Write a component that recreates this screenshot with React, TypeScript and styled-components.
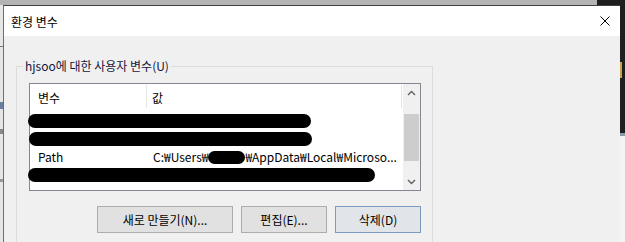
import React from "react";
import styled, { createGlobalStyle } from "styled-components";

const Global = createGlobalStyle`
  html, body { margin: 0; padding: 0; }
  body {
    width: 625px;
    height: 242px;
    overflow: hidden;
    background: #e4e4e4;
    font-family: "Noto Sans CJK KR", "Noto Sans", sans-serif;
    font-size: 12px;
    color: #000;
  }
`;

const Desktop = styled.div`
  display: grid;
  grid-template-columns: 3px 617px 5px;
  grid-template-rows: 5px 237px;
  width: 625px;
  height: 242px;
  overflow: hidden;
`;

const TopBand = styled.div`
  grid-column: 1 / 3;
  grid-row: 1;
  background: linear-gradient(to right, #b3b3b3 0, #b3b3b3 597px, #1e1e1e 597px);
`;

const LeftStrip = styled.div`
  grid-column: 1;
  grid-row: 2;
  background: #e6e6e6;
  display: flex;
  flex-direction: column;
  padding-top: 41px;
`;

const StripMark = styled.div<{ $h: number; $c: string; $gap: number }>`
  height: ${(p) => p.$h}px;
  margin-bottom: ${(p) => p.$gap}px;
  background: ${(p) => p.$c};
`;

const RightStrip = styled.div`
  grid-column: 3;
  grid-row: 1 / 3;
  display: flex;
  flex-direction: column;
`;

const DarkPane = styled.div`
  height: 133px;
  background: #1f1f1f;
  display: flex;
  flex-direction: column;
  padding-top: 62px;
  box-sizing: border-box;
`;

const Accent = styled.div`
  width: 2px;
  height: 16px;
  background: #c8a24a;
`;

const PaneLine = styled.div`
  height: 3px;
  background: #8a99a6;
`;

const LightPane = styled.div`
  flex: 1;
  background: #f3f3f3;
`;

const Dialog = styled.div`
  grid-column: 2;
  grid-row: 2;
  display: flex;
  flex-direction: column;
  border-left: 1px solid #6e6e6e;
  border-top: 1px solid #3f3f3f;
  background: #f0f0f0;
  min-height: 0;
`;

const TitleBar = styled.div`
  height: 30px;
  flex: none;
  background: #fff;
  display: flex;
  align-items: center;
  justify-content: space-between;
  padding: 0 10px 0 7px;
`;

const Title = styled.span`
  font-size: 12px;
  line-height: 16px;
  padding-top: 1px;
`;

const Body = styled.div`
  flex: 1;
  padding: 30px 0 0 12px;
  background: #f0f0f0;
`;

const GroupBox = styled.div`
  position: relative;
  width: 417px;
  height: 220px;
  box-sizing: border-box;
  border: 1px solid #dcdcdc;
  padding: 16px 11px 0 12px;
`;

const Caption = styled.span`
  position: absolute;
  top: -9px;
  left: 6px;
  padding: 0 2px;
  background: #f0f0f0;
  line-height: 16px;
  color: #14143c;
`;

const ListView = styled.div`
  width: 392px;
  height: 108px;
  box-sizing: border-box;
  border: 1px solid #828790;
  background: #fff;
  display: flex;
`;

const ListMain = styled.div`
  flex: 1;
  display: flex;
  flex-direction: column;
  min-width: 0;
`;

const Header = styled.div`
  height: 28px;
  flex: none;
  display: flex;
  align-items: flex-start;
`;

const HeaderCell = styled.div<{ $w?: number; $pad: number }>`
  ${(p) => (p.$w ? `width: ${p.$w}px; flex: none;` : `flex: 1;`)}
  height: 23px;
  margin-top: 1px;
  box-sizing: border-box;
  padding-left: ${(p) => p.$pad}px;
  border-right: 1px solid #e5e5e5;
  display: flex;
  align-items: center;
  padding-top: 2px;
  line-height: 16px;
`;

const HeaderFiller = styled.div`
  width: 1px;
  flex: none;
`;

const Row = styled.div`
  height: 18px;
  flex: none;
  display: flex;
  align-items: center;
  line-height: 16px;
  white-space: nowrap;
`;

const Cell = styled.div<{ $w?: number; $pad: number }>`
  ${(p) => (p.$w ? `width: ${p.$w}px; flex: none;` : `flex: 1; min-width: 0;`)}
  padding-left: ${(p) => p.$pad}px;
  box-sizing: border-box;
  display: flex;
  align-items: center;
`;

const Redact = styled.span<{ $w: number; $h?: number; $ml?: number }>`
  display: inline-block;
  flex: none;
  width: ${(p) => p.$w}px;
  height: ${(p) => p.$h ?? 14}px;
  margin-left: ${(p) => p.$ml ?? 0}px;
  background: #000;
  border-radius: 8px;
  position: relative;
  z-index: 1;
`;

const ScrollBar = styled.div`
  width: 17px;
  flex: none;
  background: #f0f0f0;
  display: flex;
  flex-direction: column;
  align-items: center;
`;

const ArrowBtn = styled.div`
  width: 17px;
  height: 17px;
  flex: none;
  display: flex;
  align-items: center;
  justify-content: center;
`;

const Track = styled.div`
  flex: 1;
  width: 15px;
  display: flex;
  flex-direction: column;
`;

const Thumb = styled.div`
  width: 15px;
  height: 47px;
  background: #cdcdcd;
`;

const Buttons = styled.div`
  width: 392px;
  margin-top: 15px;
  display: flex;
  justify-content: flex-end;
  gap: 8px;
`;

const Button = styled.button<{ $w: number; $default?: boolean }>`
  width: ${(p) => p.$w}px;
  height: 27px;
  box-sizing: border-box;
  border: 1px solid ${(p) => (p.$default ? "#7a9cc0" : "#adadad")};
  background: ${(p) => (p.$default ? "#e1e5ea" : "#e1e1e1")};
  font-family: inherit;
  font-size: 12px;
  color: #000;
  padding: 0;
  line-height: 16px;
`;

const Chevron = ({ up }: { up?: boolean }) => (
  <svg width="9" height="6" viewBox="0 0 9 6">
    <path
      d={up ? "M1 5 L4.5 1.5 L8 5" : "M1 1 L4.5 4.5 L8 1"}
      fill="none"
      stroke="#606060"
      strokeWidth="1.4"
    />
  </svg>
);

export default function App() {
  return (
    <>
      <Global />
      <Desktop>
        <TopBand />
        <LeftStrip>
          <StripMark $h={1} $c="#777" $gap={55} />
          <StripMark $h={7} $c="#6a7fa0" $gap={20} />
          <StripMark $h={5} $c="#888" $gap={45} />
          <StripMark $h={3} $c="#999" $gap={0} />
        </LeftStrip>
        <Dialog>
          <TitleBar>
            <Title>환경 변수</Title>
            <svg width="10" height="10" viewBox="0 0 10 10">
              <path d="M0.5 0.5 L9.5 9.5 M9.5 0.5 L0.5 9.5" stroke="#000" strokeWidth="1" />
            </svg>
          </TitleBar>
          <Body>
            <GroupBox>
              <Caption>hjsoo에 대한 사용자 변수(U)</Caption>
              <ListView>
                <ListMain>
                  <Header>
                    <HeaderCell $w={117} $pad={8}>변수</HeaderCell>
                    <HeaderCell $pad={5}>값</HeaderCell>
                    <HeaderFiller />
                  </Header>
                  <Row>
                    <Redact $w={283} $ml={-2} />
                  </Row>
                  <Row>
                    <Redact $w={283} $ml={-1} />
                  </Row>
                  <Row>
                    <Cell $w={117} $pad={8}>Path</Cell>
                    <Cell $pad={6}>
                      C:₩Users₩
                      <Redact $w={37} $h={13} />
                      ₩AppData₩Local₩Microso...
                    </Cell>
                  </Row>
                  <Row>
                    <Redact $w={347} $ml={-2} />
                  </Row>
                </ListMain>
                <ScrollBar>
                  <ArrowBtn>
                    <Chevron up />
                  </ArrowBtn>
                  <Track>
                    <div style={{ height: 13 }} />
                    <Thumb />
                  </Track>
                  <ArrowBtn>
                    <Chevron />
                  </ArrowBtn>
                </ScrollBar>
              </ListView>
              <Buttons>
                <Button $w={136}>새로 만들기(N)...</Button>
                <Button $w={86}>편집(E)...</Button>
                <Button $w={86} $default>
                  삭제(D)
                </Button>
              </Buttons>
            </GroupBox>
          </Body>
        </Dialog>
        <RightStrip>
          <DarkPane>
            <Accent />
          </DarkPane>
          <PaneLine />
          <LightPane />
        </RightStrip>
      </Desktop>
    </>
  );
}
